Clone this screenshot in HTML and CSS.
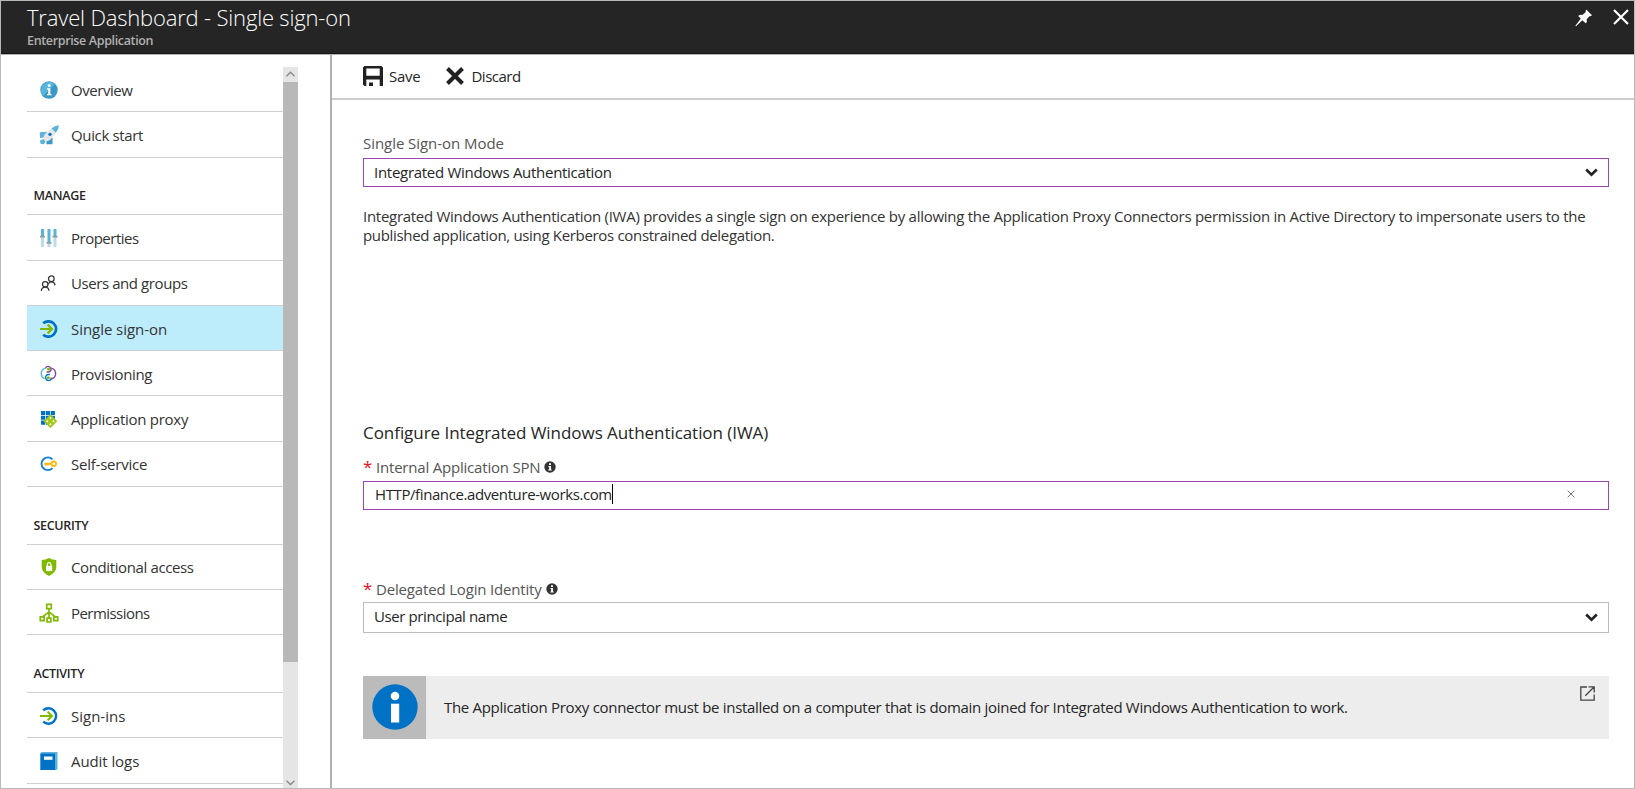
FILE: index.html
```html
<!DOCTYPE html>
<html lang="en">
<head>
<meta charset="utf-8">
<title>Travel Dashboard - Single sign-on</title>
<link rel="stylesheet" href="styles.css">
</head>
<body>
<div class="blade">
  <header class="blade-header">
    <div class="titles">
      <h1 class="title">Travel Dashboard - Single sign-on</h1>
      <p class="subtitle">Enterprise Application</p>
    </div>
    <div class="header-actions">
      <svg class="pin" width="18" height="18" viewBox="0 0 18 18"><path fill="#fff" d="M11.3.6 17 6.2 15.6 7.3 14.8 6.9 11.700 10.200Q12.400 12.700 10.700 14.200L7.300 11.200 1 17.200.400 16.700 5.700 9.800 3.200 7.100Q5 5.300 7.300 5.900L10.900 3.100 10.400 2Z"/></svg>
      <svg class="close" width="16" height="16" viewBox="0 0 16 16"><path stroke="#fff" stroke-width="2.200" d="M1 1 15 15M15 1 1 15"/></svg>
    </div>
  </header>
  <div class="blade-body">
    <aside class="sidebar">
      <nav class="menu">
        <a class="item"><svg class="icon" viewBox="0 0 18 18"><circle cx="9" cy="9" r="8.700" fill="#3999c6"/><path fill="#59b4d9" d="M3 15.200A8.700 8.700 0 0 1 15 2.700Z"/><circle cx="9.200" cy="4.500" r="1.500" fill="#fff"/><path fill="#fff" d="M7 7.200h3.400v5.900h1.200v1.200H7v-1.200h1.200V8.400H7z"/></svg><span class="t-overview">Overview</span></a>
        <a class="item"><svg class="icon wide" viewBox="0 0 20 20"><path fill="#59b4d9" d="M.8 7.300 8 6.800 6 12.500 1 13ZM1 15.500 4.500 14 6.500 16.500 5 19.300 1.500 18.800Z"/><path fill="#3999c6" d="M7.500 15 13.500 12.500V19.300H7.500Z"/><path fill="#e5e5e5" d="M12.500 3.500 17 8 11.500 14.500Q8 17.500 5.300 15 2.800 12.500 6.500 8.500Z"/><path fill="#59b4d9" d="M20 .2Q15.500.4 12.500 3.500L16.800 7.800Q19.800 4.500 20 .2Z"/><circle cx="11" cy="9.300" r="1.600" fill="#0072c6"/></svg><span class="t-quick">Quick start</span></a>
        <h2 class="group">MANAGE</h2>
        <a class="item"><svg class="icon" viewBox="0 0 18 18"><path fill="#b8dceb" d="M1 8h3v10.500H1zM7.500 14h3v4.500h-3zM13.500 8h3v10.500h-3z"/><path fill="#59b4d9" d="M1 0h3v8H1zM7.500 0h3v14h-3zM13.500 0h3v8h-3z"/><path fill="#999" d="M0 6.800h5v1.800H0zM6.500 13h5v1.800h-5zM12.500 6.800h5v1.800h-5z"/></svg><span class="t-prop">Properties</span></a>
        <a class="item"><svg class="icon people" viewBox="0 0 18 18" fill="none" stroke="#333" stroke-width="1.300"><circle cx="12" cy="4" r="3"/><path d="M8.500 9.800Q10 7 12 7.200 15.500 7.200 16 11"/><circle cx="5.500" cy="9.800" r="2.900"/><path d="M1.300 16.700Q2 12.900 5.500 12.900 9 12.900 9.500 16.700"/></svg><span class="t-users">Users and groups</span></a>
        <a class="item selected"><svg class="icon" viewBox="0 0 18 18" fill="none"><path stroke="#0072c6" stroke-width="2.700" d="M3.200 3.300A7.700 7.700 0 1 1 3.200 14.700"/><path stroke="#7fba00" stroke-width="2.200" d="M0 9H11.500M7.600 4.600 12 9 7.600 13.400"/></svg><span class="t-sso">Single sign-on</span></a>
        <a class="item"><svg class="icon people" viewBox="0 0 18 18" fill="none"><path stroke="#59b4d9" stroke-width="1.500" d="M6.500 3Q1 4.500 1.300 9.500 1.800 13.500 5 14.300"/><path stroke="#804998" stroke-width="1.500" d="M12 3.300Q16.700 4.500 16.500 9.500 16.200 13.700 12.500 14.500L11 13.700"/><path stroke="#804998" stroke-width="1.500" d="M6 3.100A3 3 0 1 1 9 7.400H7"/><path stroke="#0078d7" stroke-width="1.500" d="M10.500 10H8.500A3.300 3.300 0 1 0 12 15"/><circle cx="9" cy="4.200" r="1.600" fill="#7fba00"/><circle cx="8.800" cy="13.500" r="1.600" fill="#7fba00"/></svg><span class="t-provision">Provisioning</span></a>
        <a class="item"><svg class="icon people" viewBox="0 0 18 18"><path fill="#0072c6" d="M1 0h4.500v4.300H1zM6.200 0h4.300v4.300H6.200zM11.300 0h4.500v4.300h-4.500zM1 5h4.500v4.300H1zM6.200 5h4.300v4.300H6.200zM1 10h4.500v4.500H1zM11.300 5h4.500v4.300h-4.500zM6.200 10h4.300v4.500H6.200z"/><path fill="#a2c617" d="M11 3.500 18.300 10.800 11 18.100 3.700 10.800Z"/><path fill="#fff" d="m11 6.200 1.200 1.300L11 8.800 9.800 7.500zM11 12.800l1.200 1.300L11 15.400 9.800 14.100zM7.700 9.500l1.200 1.300-1.200 1.300-1.200-1.300zM14.300 9.500l1.200 1.300-1.200 1.300-1.200-1.300z"/></svg><span class="t-proxy">Application proxy</span></a>
        <a class="item"><svg class="icon people" viewBox="0 0 18 18" fill="none"><path stroke="#1683d3" stroke-width="2" d="M13.200 3.600A6.700 6.700 0 1 0 13.200 12.800"/><circle cx="14.600" cy="8.200" r="2.400" stroke="#fcb813" stroke-width="1.900"/><path stroke="#fcb813" stroke-width="1.900" d="M12.200 8.200H4.500M6 8v2.300M8.500 8v2"/></svg><span class="t-self">Self-service</span></a>
        <h2 class="group">SECURITY</h2>
        <a class="item"><svg class="icon" viewBox="0 0 18 18"><path fill="#7fba00" d="M9 0Q12.500 2 16.300 2V9Q16 14.500 9 18 2 14.500 1.700 9V2Q5.500 2 9 0Z"/><path fill="#fff" d="M6 7.800h6.200v5.300H6z"/><path fill="none" stroke="#fff" stroke-width="1.200" d="M7.300 8V6.300Q7.500 4.700 9.100 4.700 10.700 4.700 10.900 6.300V8"/></svg><span class="t-cond">Conditional access</span></a>
        <a class="item"><svg class="icon wide" viewBox="0 0 20 20" fill="none" stroke="#7fba00" stroke-width="1.700"><path d="M7.700 1.300h4.600v4.400H7.700zM1.300 13.900h3.800v3.800H1.300zM8.100 15.200h3.800V19H8.100zM14.900 13.900h3.800v3.800h-3.800zM10 5.700v9.500M10 9 3.500 13.900M10 9l6.500 4.900"/></svg><span class="t-perm">Permissions</span></a>
        <h2 class="group">ACTIVITY</h2>
        <a class="item"><svg class="icon" viewBox="0 0 18 18" fill="none"><path stroke="#0072c6" stroke-width="2.400" d="M3.200 3.300A7.700 7.700 0 1 1 3.200 14.700"/><path stroke="#7fba00" stroke-width="2" d="M0 9H11.500M7.600 4.600 12 9 7.600 13.400"/></svg><span class="t-signins">Sign-ins</span></a>
        <a class="item"><svg class="icon" viewBox="0 0 18 18"><path fill="#59b4d9" d="M1.500 0H17.500V17.300L15.300 18.300V1.300H.3z"/><path fill="#0072c6" d="M.3 1.300H15.300V18.500H.3z"/><path fill="#fff" d="M4 4.500h8.500V7.800H4z"/></svg><span class="t-audit">Audit logs</span></a>
      </nav>
      <div class="scrollbar">
        <svg class="arrow" viewBox="0 0 15 15"><path d="M3.500 9.200 7.500 5.200 11.500 9.200"/></svg>
        <div class="thumb"></div>
        <svg class="arrow down" viewBox="0 0 15 15"><path d="M3.500 7.700 7.500 11.500 11.500 7.700"/></svg>
      </div>
    </aside>
    <main class="content">
      <div class="toolbar">
        <button class="command"><svg width="20" height="20" viewBox="0 0 20 20"><path fill="#222" fill-rule="evenodd" d="M1.500 0H18.500L20 1.500V20H16.700V13.600H3.300V20H1.500L0 18.500V1.500ZM3.300 2.500V9.800H16.700V2.500Z"/><path fill="#222" d="M6 16.500h4V20H6z"/></svg><span class="t-save">Save</span></button>
        <button class="command"><svg width="18" height="18" viewBox="0 0 18 18"><path stroke="#222" stroke-width="4" d="M1.500 1.500 16.500 16.500M16.500 1.500 1.500 16.500"/></svg><span class="t-discard">Discard</span></button>
      </div>
      <div class="form">
        <label class="label mode-label"><span class="t-mode">Single Sign-on Mode</span></label>
        <div class="field active"><span class="t-iwa">Integrated Windows Authentication</span><svg class="chevron" viewBox="0 0 13 9"><path d="M1.200 1.500 6.500 6.700 11.800 1.500"/></svg></div>
        <p class="description"><span class="t-desc1">Integrated Windows Authentication (IWA) provides a single sign on experience by allowing the Application Proxy Connectors permission in Active Directory to impersonate users to the</span><br><span class="t-desc2">published application, using Kerberos constrained delegation.</span></p>
        <h2 class="section">Configure Integrated Windows Authentication (IWA)</h2>
        <label class="label spn-label"><span class="star">*</span><span class="t-spn">Internal Application SPN</span><svg class="hint" viewBox="0 0 12 12"><circle cx="6" cy="6" r="5.700" fill="#333"/><path fill="#fff" d="M5 2.200h2v1.700H5zM4.300 4.900H7v3.700h.8v1H4.300v-1h.8V5.800h-.8z"/></svg></label>
        <div class="field active text"><span class="t-value">HTTP/finance.adventure-works.com</span><i class="caret"></i><svg class="clear" viewBox="0 0 8 8"><path d="M.7.7 7.300 7.300M7.300.7.7 7.300"/></svg></div>
        <label class="label identity-label"><span class="star">*</span><span class="t-deleg">Delegated Login Identity</span><svg class="hint" viewBox="0 0 12 12"><circle cx="6" cy="6" r="5.700" fill="#333"/><path fill="#fff" d="M5 2.200h2v1.700H5zM4.300 4.900H7v3.700h.8v1H4.300v-1h.8V5.800h-.8z"/></svg></label>
        <div class="field identity"><span class="t-upn">User principal name</span><svg class="chevron" viewBox="0 0 13 9"><path d="M1.200 1.500 6.500 6.700 11.800 1.500"/></svg></div>
        <div class="notice">
          <div class="notice-icon"><svg width="46" height="46" viewBox="0 0 46 46"><circle cx="23" cy="23" r="22.700" fill="#0072c6"/><circle cx="23" cy="12" r="4.300" fill="#fff"/><path fill="#fff" d="M19 19.700h8.200V38.500H19z"/></svg></div>
          <p class="notice-text"><span class="t-notice">The Application Proxy connector must be installed on a computer that is domain joined for Integrated Windows Authentication to work.</span></p>
          <svg class="external" viewBox="0 0 15 15"><path d="M7 1H.8V14.200H14.200V8.500M8.500.8H14.200V6.500M14 1 5.300 9.700"/></svg>
        </div>
      </div>
    </main>
  </div>
</div>
</body>
</html>
```
FILE: styles.css
```css
* { box-sizing: border-box; }
body { margin: 0; font-family: "Open Sans", sans-serif; font-size: 15px; color: #262626; background: #fff; }
h1, h2, p { margin: 0; }
span { white-space: nowrap; }
svg { flex: none; display: block; }

.blade { width: 1635px; height: 789px; border: 1px solid #b9b9b9; overflow: hidden; display: flex; flex-direction: column; }
.blade-header { height: 53px; flex: none; background: #252525; border-bottom: 1px solid #151515; display: flex; justify-content: space-between; padding: 1px 5px 0 26px; }
.title { font-size: 22px; line-height: 31px; font-weight: 300; color: #fff; letter-spacing: -.18px; white-space: nowrap; }
.subtitle { font-size: 12.500px; line-height: 15px; font-weight: 600; color: #b0b0b0; letter-spacing: -.35px; white-space: nowrap; }
.header-actions { display: flex; gap: 20px; padding-top: 7px; }

.blade-body { flex: 1; display: flex; min-height: 0; border-top: 1px solid #b5b5b5; }
.sidebar { width: 331px; flex: none; display: flex; padding: 12px 0 0 26px; border-right: 2px solid #b0b0b0; }
.menu { width: 256px; overflow: hidden; }
.item { display: flex; align-items: center; height: 45.300px; padding: 1px 0 0 13px; border-bottom: 1.500px solid #d0d0d0; color: #333; }
.item.selected { background: #bdedfb; }
.icon { width: 18px; height: 18px; margin-right: 13px; }
.icon.wide { width: 20px; height: 20px; margin: 0 12px 0 -1px; }
.icon.people { width: 17px; height: 17px; margin-right: 14px; }
.group { height: 57.700px; padding: 28.500px 0 0 6.500px; font-size: 12.500px; line-height: 20px; font-weight: 600; border-bottom: 1.500px solid #d0d0d0; letter-spacing: -.3px; }
.scrollbar { width: 15px; background: #e5e5e5; display: flex; flex-direction: column; }
.arrow { width: 15px; height: 15px; fill: none; stroke: #888; stroke-width: 1.300; }
.arrow.down { margin-top: auto; height: 15px; }
.thumb { height: 580px; background: #b8b8b8; }

.content { flex: 1; min-width: 0; }
.toolbar { height: 45px; border-bottom: 2px solid #ccc; display: flex; align-items: center; gap: 26px; padding: 0 0 1px 31px; }
.command { display: flex; align-items: center; gap: 6px; padding: 0; border: 0; background: none; font: inherit; color: #262626; }
.command + .command { gap: 7px; }

.form { width: 1277px; padding: 31px 0 0 31px; }
.label { display: flex; align-items: center; height: 24px; color: #555; }
.mode-label { margin-bottom: 3px; }
.field { height: 29px; border: 1px solid #bcbcbc; display: flex; align-items: center; padding: 0 10px 2px; }
.field.active { border-color: #9a44b5; }
.chevron { position: relative; top: 1px; margin-left: auto; width: 13px; height: 9px; fill: none; stroke: #222; stroke-width: 2.600; }
.description { margin-top: 20px; line-height: 19.300px; color: #333; }
.section { margin-top: 174px; font-size: 17px; line-height: 26px; font-weight: 400; letter-spacing: -.05px; white-space: nowrap; }
.spn-label { margin-top: 9px; }
.star { width: 13px; color: #e81123; font-size: 17px; }
.hint { width: 12px; height: 12px; margin-left: 4px; }
.field.text { padding-left: 11px; margin-top: 2px; }
.caret { width: 1px; height: 20px; background: #000; }
.clear { width: 8px; height: 8px; margin: 0 23px 0 auto; fill: none; stroke: #777; stroke-width: 1; }
.identity-label { margin-top: 67px; }
.field.identity { height: 31px; margin-top: 1px; }
.notice { margin-top: 43px; height: 63px; background: #ededed; display: flex; }
.notice-icon { width: 63px; background: #bbb; display: flex; align-items: center; justify-content: center; }
.notice-text { padding-left: 18px; line-height: 63px; }
.external { width: 15px; height: 15px; margin: 10px 14px 0 auto; fill: none; stroke: #444; stroke-width: 1.300; }

/* Per-string tracking */
.t-overview { letter-spacing: -.45px; }
.t-quick { letter-spacing: -.35px; }
.t-prop { letter-spacing: -.5px; }
.t-users { letter-spacing: -.42px; }
.t-sso { letter-spacing: -.05px; }
.t-provision { letter-spacing: -.4px; }
.t-proxy { letter-spacing: -.28px; }
.t-self { letter-spacing: -.23px; }
.t-cond { letter-spacing: -.38px; }
.t-perm { letter-spacing: -.55px; }
.t-audit { letter-spacing: -.08px; }
.t-save { letter-spacing: -.25px; }
.t-discard { letter-spacing: -.5px; }
.t-mode { letter-spacing: -.05px; }
.t-iwa { letter-spacing: -.285px; }
.t-desc1 { letter-spacing: -.28px; }
.t-desc2 { letter-spacing: -.325px; }
.t-spn { letter-spacing: -.2px; }
.t-value { letter-spacing: -.4px; }
.t-deleg { letter-spacing: -.17px; }
.t-upn { letter-spacing: -.4px; }
.t-notice { letter-spacing: -.306px; }
```
